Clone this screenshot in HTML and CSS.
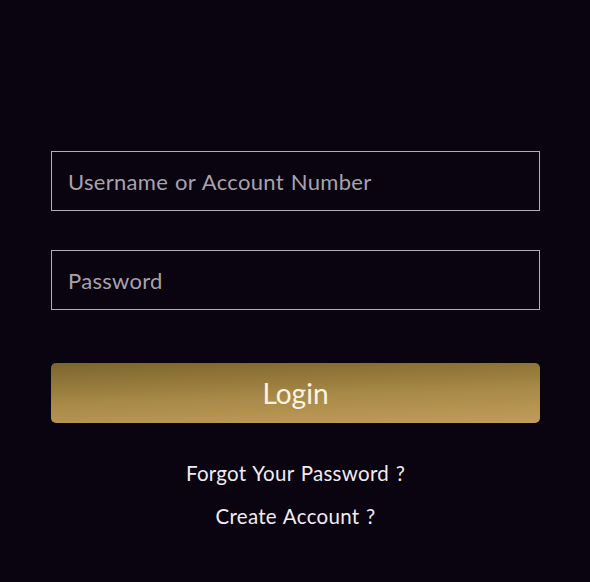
FILE: index.html
```html
<!DOCTYPE html>
<html lang="en">
<head>
<meta charset="utf-8">
<title>Login</title>
<link rel="stylesheet" href="styles.css">
</head>
<body>
<main class="page">
  <form class="login-form">
    <div class="field"><input class="input" type="text" placeholder="Username or Account Number"></div>
    <div class="field"><input class="input" type="password" placeholder="Password"></div>
    <button class="btn-login" type="button">Login</button>
    <div class="links">
      <a class="link" href="#">Forgot Your Password ?</a>
      <a class="link" href="#">Create Account ?</a>
    </div>
  </form>
</main>
</body>
</html>
```
FILE: styles.css
```css
html, body {
  margin: 0;
  padding: 0;
  background: #0a0310;
}
body {
  font-family: "Lato", "Noto Sans", sans-serif;
  width: 590px;
  height: 582px;
  overflow: hidden;
}
.page {
  padding: 151px 50px 0 51px;
}
.login-form {
  display: flex;
  flex-direction: column;
}
.field {
  margin-bottom: 39px;
}
.input {
  box-sizing: border-box;
  display: block;
  width: 100%;
  height: 60px;
  background: transparent;
  border: 1px solid #b3acb9;
  padding: 0 16px;
  font-family: inherit;
  font-size: 22px;
  letter-spacing: 0.3px;
  word-spacing: 1px;
  color: #e8e4ea;
  outline: none;
}
.input::placeholder {
  color: #a8a2ad;
}
.btn-login {
  margin-top: 14px;
  height: 60px;
  border: none;
  border-radius: 5px;
  background: linear-gradient(178deg, #7c652c 0%, #a98a48 55%, #c19c5a 100%);
  color: #fbf4e6;
  font-family: inherit;
  font-size: 28px;
  cursor: pointer;
}
.links {
  margin-top: 36px;
  display: flex;
  flex-direction: column;
  align-items: center;
  gap: 15px;
}
.link {
  color: #f1ecf3;
  text-decoration: none;
  font-size: 20.5px;
  letter-spacing: 0.3px;
  word-spacing: 1px;
  line-height: 28px;
}
```
